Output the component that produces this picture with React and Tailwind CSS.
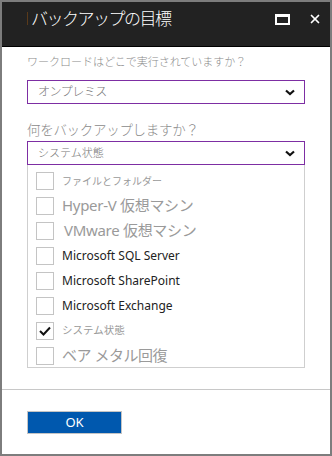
import { X } from "lucide-react";

const JP = "font-['Segoe_UI','Noto_Sans','Noto_Sans_CJK_JP',sans-serif]";

const ITEMS = [
  { label: "ファイルとフォルダー", cls: "text-[10px] text-[#9a9a9a]" },
  { label: "Hyper-V 仮想マシン", cls: "text-[15px] text-[#9a9a9a] tracking-[-0.3px]" },
  { label: "VMware 仮想マシン", cls: "ml-[2px] text-[15px] text-[#9a9a9a] tracking-[-0.3px]" },
  { label: "Microsoft SQL Server", cls: "text-[12px] text-[#222]" },
  { label: "Microsoft SharePoint", cls: "text-[12px] text-[#222]" },
  { label: "Microsoft Exchange", cls: "text-[12px] text-[#222]" },
  { label: "システム状態", cls: "text-[10.5px] text-[#9a9a9a]", checked: true },
  { label: "ベア メタル回復", cls: "text-[15px] text-[#9a9a9a] tracking-[-0.5px]" },
];

function Chevron() {
  return (
    <svg width="10" height="7" viewBox="0 0 10 7" className="mr-[9px]">
      <path d="M1 1.5 L5 5 L9 1.5" fill="none" stroke="#111" strokeWidth="2.2" />
    </svg>
  );
}

function Check() {
  return (
    <svg width="12" height="10" viewBox="0 0 12 10">
      <path d="M1 5 L4.5 8.5 L11 1.5" fill="none" stroke="#111" strokeWidth="2" />
    </svg>
  );
}

export default function App() {
  return (
    <div className={`flex h-[456px] w-[332px] flex-col border-2 border-[#7d7d7d] bg-white ${JP}`}>
      <div className="flex h-[45px] shrink-0 items-start border-b border-black bg-[#222222] pl-[25px] pr-[8px] pt-[6px]">
        <div className="mt-[4px] h-[13px] w-px bg-[#5a3a1a]" />
        <h1 className="ml-[3px] text-[17px] font-light leading-[22px] tracking-[-1.5px] text-white">バックアップの目標</h1>
        <div className="ml-auto mt-[4px] flex items-center gap-[18px]">
          <div className="h-[11px] w-[15px] border-2 border-t-[3px] border-white" />
          <X className="h-[14px] w-[14px] text-white" strokeWidth={3} />
        </div>
      </div>

      <div className="flex flex-1 flex-col px-[25px] pt-[7px]">
        <p className="text-[11px] font-light leading-[16px] text-[#8a8a8a]">ワークロードはどこで実行されていますか？</p>
        <div className="mt-[10px] flex h-[24px] items-center justify-between border border-[#7d2ea3] pl-[10px]">
          <span className="text-[12px] font-light tracking-[-0.5px] text-[#777]">オンプレミス</span>
          <Chevron />
        </div>

        <p className="mt-[16px] text-[13.5px] font-light leading-[20px] tracking-[-0.3px] text-[#8a8a8a]">何をバックアップしますか？</p>
        <div className="mt-[1px] flex h-[24px] items-center justify-between border border-[#7d2ea3] pl-[10px]">
          <span className="text-[11px] font-light text-[#777]">システム状態</span>
          <Chevron />
        </div>

        <div className="flex h-[203px] flex-col overflow-hidden border border-t-0 border-[#cfcfcf] pl-[8px] pt-[3px]">
          {ITEMS.map((item) => (
            <div key={item.label} className="flex h-[25px] shrink-0 items-center gap-[8px]">
              <div className="flex h-[18px] w-[18px] shrink-0 items-center justify-center border border-[#c4c4c4] bg-white">
                {item.checked && <Check />}
              </div>
              <span className={`whitespace-nowrap leading-none ${item.cls}`}>{item.label}</span>
            </div>
          ))}
        </div>
      </div>

      <div className="h-[65px] shrink-0 border-t border-[#c8c8c8] px-[25px] pt-[21px]">
        <button
          type="button"
          className="flex h-[23px] w-[95px] items-center justify-center border border-[#c4c4c4] bg-[#0058ae] text-[13px] text-white"
        >
          OK
        </button>
      </div>
    </div>
  );
}
